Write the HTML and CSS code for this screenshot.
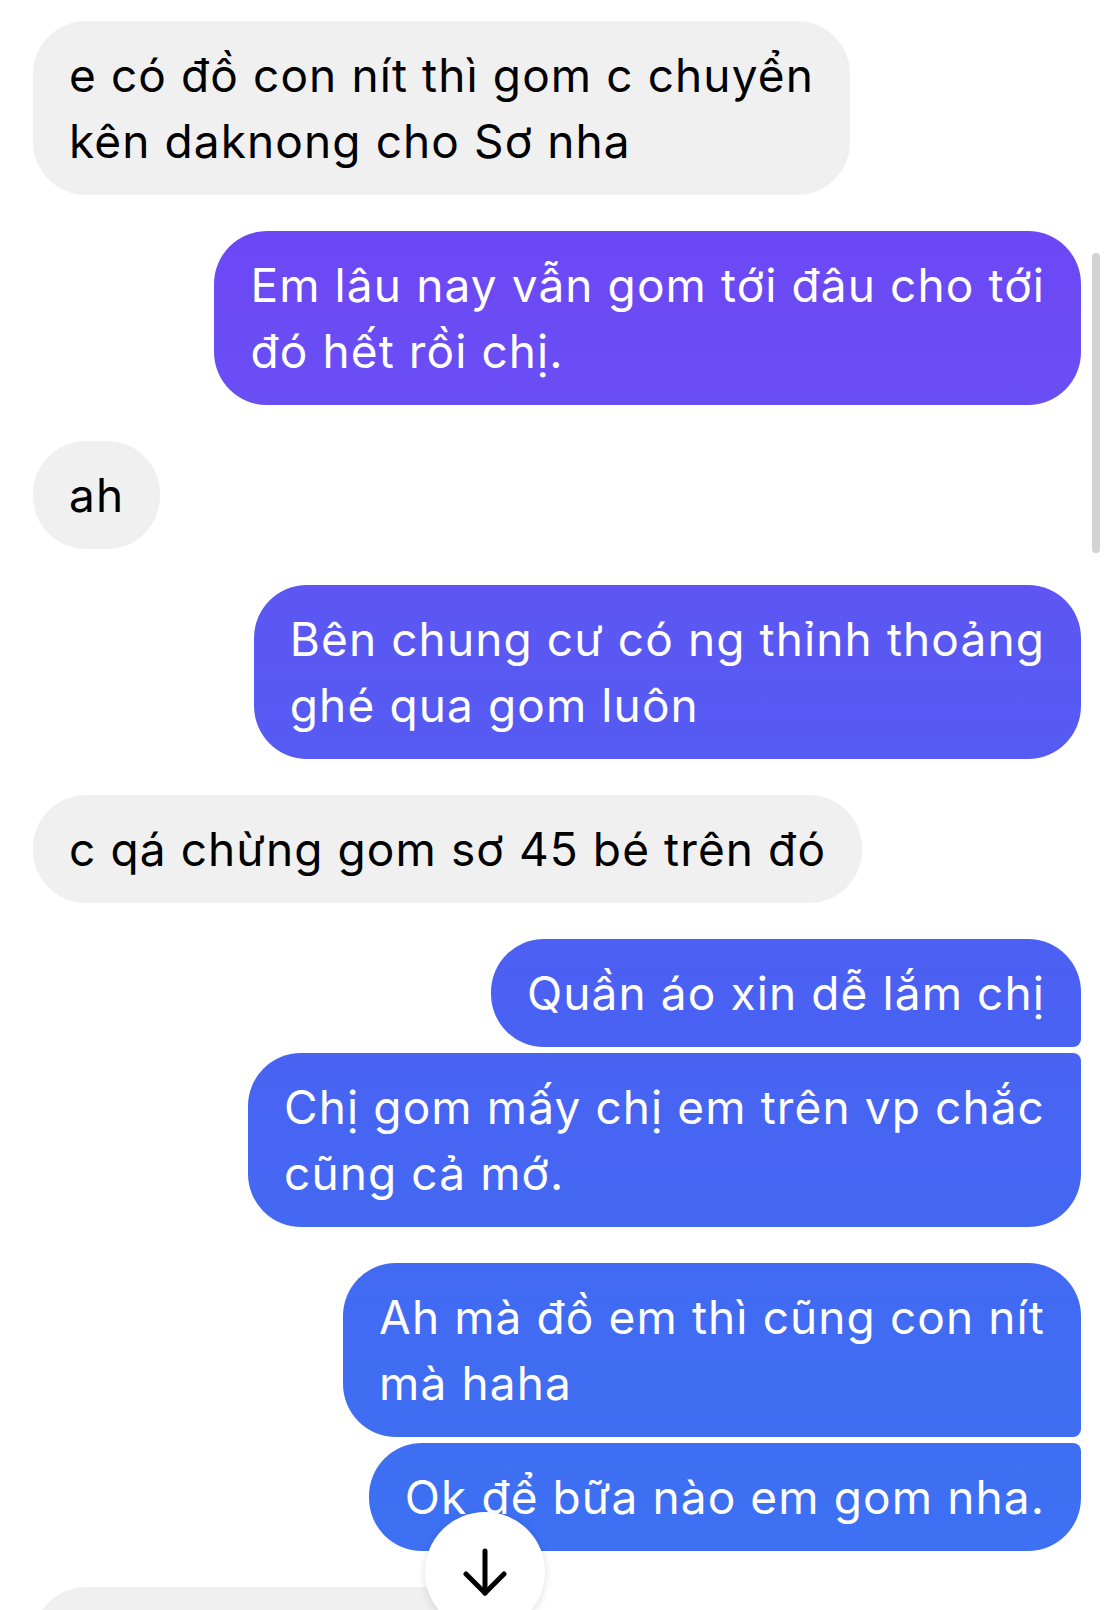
FILE: index.html
```html
<!DOCTYPE html>
<html lang="vi">
<head>
    <meta charset="UTF-8">
    <meta name="viewport" content="width=device-width, initial-scale=1.0">
    <title>Tin nhắn</title>
    <link rel="stylesheet" href="styles.css">
</head>
<body>

<div class="chat">
    <div class="group incoming">
        <div class="bubble">e có đồ con nít thì gom c chuyển<br>kên daknong cho Sơ nha</div>
    </div>

    <div class="group outgoing">
        <div class="bubble">Em lâu nay vẫn gom tới đâu cho tới<br>đó hết rồi chị.</div>
    </div>

    <div class="group incoming">
        <div class="bubble">ah</div>
    </div>

    <div class="group outgoing">
        <div class="bubble">Bên chung cư có ng thỉnh thoảng<br>ghé qua gom luôn</div>
    </div>

    <div class="group incoming">
        <div class="bubble">c qá chừng gom sơ 45 bé trên đó</div>
    </div>

    <div class="group outgoing">
        <div class="bubble">Quần áo xin dễ lắm chị</div>
        <div class="bubble">Chị gom mấy chị em trên vp chắc<br>cũng cả mớ.</div>
    </div>

    <div class="group outgoing">
        <div class="bubble">Ah mà đồ em thì cũng con nít<br>mà haha</div>
        <div class="bubble">Ok để bữa nào em gom nha.</div>
    </div>

    <div class="group incoming">
        <div class="bubble bubble-next">&nbsp;</div>
    </div>
</div>

<!-- scroll indicator + jump to latest -->
<div class="scroll-thumb"></div>
<button class="scroll-down" aria-label="Cuộn xuống">
    <svg width="44" height="50" viewBox="0 0 44 50" fill="none" stroke="#000" stroke-width="5" stroke-linecap="round" stroke-linejoin="round">
        <path d="M22 3 V45"/>
        <path d="M3 26 L22 45 L41 26"/>
    </svg>
</button>

</body>
</html>
```

FILE: styles.css
```css
/* Basic reset */
* {
    margin: 0;
    padding: 0;
    box-sizing: border-box;
}

html,
body {
    height: 1610px;
    overflow: hidden;
}

body {
    font-family: Inter, 'Noto Sans', 'Liberation Sans', sans-serif;
    background-color: #fff;
    position: relative;
}

/* Message list */
.chat {
    display: flex;
    flex-direction: column;
    gap: 36px;
    padding: 21px 25px 0 33px;
}

.group {
    display: flex;
    flex-direction: column;
    gap: 6px;
}

.incoming {
    align-items: flex-start;
}

.outgoing {
    align-items: flex-end;
}

/* Bubbles */
.bubble {
    font-size: 46px;
    letter-spacing: 1.1px;
    line-height: 66px;
    padding: 21px 36px;
    border-radius: 53px;
    white-space: nowrap;
}

.incoming .bubble {
    background-color: #f0f0f0;
    color: #000;
}

.outgoing .bubble {
    color: #fff;
    /* gradient is pinned to the screen, like Messenger */
    background: linear-gradient(180deg, #7440f6 0%, #6c48f5 15%, #6a4ef4 24%, #5a58f3 40%, #4a61f3 62%, #416bf2 82%, #3c72f2 100%) fixed;
}

.outgoing .bubble:not(:last-child) {
    border-bottom-right-radius: 8px;
}

.outgoing .bubble:not(:first-child) {
    border-top-right-radius: 8px;
}

.bubble-next {
    width: 470px;
}

/* Scroll thumb */
.scroll-thumb {
    position: absolute;
    top: 253px;
    left: 1092px;
    width: 8px;
    height: 300px;
    border-radius: 4px;
    background-color: #d2d2d2;
}

/* Jump to bottom button */
.scroll-down {
    position: absolute;
    top: 1512px;
    left: 425px;
    width: 120px;
    height: 120px;
    border: none;
    border-radius: 50%;
    background-color: #fff;
    box-shadow: 0 2px 10px rgba(0, 0, 0, 0.12);
    display: flex;
    justify-content: center;
    padding-top: 36px;
}
```
